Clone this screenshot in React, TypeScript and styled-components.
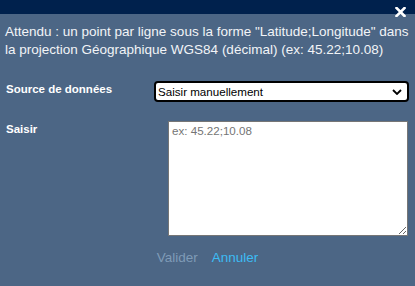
import React from "react";
import styled, { createGlobalStyle } from "styled-components";

const Global = createGlobalStyle`
  html, body { margin: 0; padding: 0; background: #4c6685; }
  body { font-family: "Liberation Sans", Arial, sans-serif; }
`;

const Dialog = styled.div`
  width: 415px;
  height: 286px;
  background: #4c6685;
  display: flex;
  flex-direction: column;
  overflow: hidden;
`;

const TitleBar = styled.div`
  position: relative;
  height: 14px;
  background: #00214d;
  flex: none;
`;

const Close = styled.button`
  position: absolute;
  right: 9px;
  top: 7px;
  width: 11px;
  height: 10px;
  padding: 0;
  border: none;
  background: transparent;
  cursor: pointer;
  display: flex;
`;

const Body = styled.div`
  padding: 9px 6px 0 5px;
  display: flex;
  flex-direction: column;
`;

const Message = styled.p`
  margin: 0;
  font-size: 13.5px;
  line-height: 18px;
  color: #f2f4f7;
`;

const Form = styled.div`
  margin-top: 22px;
  display: grid;
  grid-template-columns: 149px 1fr;
  row-gap: 19px;
  align-items: start;
`;

const Label = styled.label`
  font-size: 11.5px;
  font-weight: bold;
  line-height: 14px;
  color: #ffffff;
  padding-left: 1px;
  padding-top: 1px;
`;

const SelectWrap = styled.div`
  position: relative;
  height: 21px;
`;

const Select = styled.select`
  appearance: none;
  width: 100%;
  height: 21px;
  box-sizing: border-box;
  border: 2px solid #000;
  border-radius: 4px;
  background: #fff;
  font-family: "Liberation Sans", Arial, sans-serif;
  font-size: 11.6px;
  color: #000;
  padding: 0 0 0 2px;
  margin: 0;
  outline: none;
`;

const Chevron = styled.svg`
  position: absolute;
  right: 7px;
  top: 8px;
  pointer-events: none;
`;

const TextArea = styled.textarea`
  margin: 0 0 0 14px;
  width: 240px;
  height: 115px;
  box-sizing: border-box;
  border: 1px solid #767676;
  border-radius: 0;
  background: #fff;
  padding: 2px 3px;
  font-family: "Liberation Sans", Arial, sans-serif;
  font-size: 11.6px;
  color: #000;
  &::placeholder { color: #757575; }
`;

const Actions = styled.div`
  margin-top: 14px;
  display: flex;
  justify-content: center;
  gap: 14px;
  padding-left: 1px;
`;

const Action = styled.button<{ $active?: boolean }>`
  border: none;
  background: transparent;
  padding: 0;
  font-family: "Liberation Sans", Arial, sans-serif;
  font-size: 13.5px;
  line-height: 16px;
  color: ${(p) => (p.$active ? "#3cbcf4" : "#7f9bb7")};
  cursor: pointer;
`;

export default function App() {
  return (
    <>
      <Global />
      <Dialog>
        <TitleBar>
          <Close aria-label="Fermer">
            <svg width="11" height="10" viewBox="0 0 11 10">
              <path d="M1.5 1 L9.5 9 M9.5 1 L1.5 9" stroke="#fff" strokeWidth="2.6" strokeLinecap="square" />
            </svg>
          </Close>
        </TitleBar>
        <Body>
          <Message>
            Attendu : un point par ligne sous la forme "Latitude;Longitude" dans la projection Géographique WGS84 (décimal) (ex: 45.22;10.08)
          </Message>
          <Form>
            <Label>Source de données</Label>
            <SelectWrap>
              <Select defaultValue="manual">
                <option value="manual">Saisir manuellement</option>
              </Select>
              <Chevron width="10" height="6" viewBox="0 0 10 6">
                <path d="M1 1 L5 5 L9 1" stroke="#000" strokeWidth="1.8" fill="none" />
              </Chevron>
            </SelectWrap>
            <Label>Saisir</Label>
            <TextArea placeholder="ex: 45.22;10.08" />
          </Form>
          <Actions>
            <Action>Valider</Action>
            <Action $active>Annuler</Action>
          </Actions>
        </Body>
      </Dialog>
    </>
  );
}
